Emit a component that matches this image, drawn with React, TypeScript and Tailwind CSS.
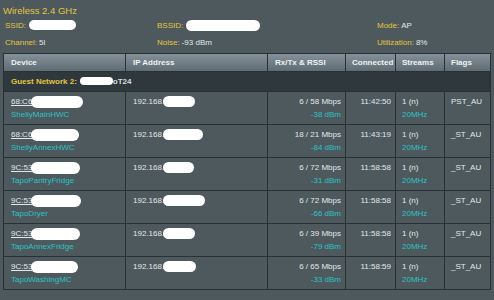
import React from "react";

interface Client {
  mac: string;
  macBlob: number;
  ipBlob: number;
  name: string;
  rate: string;
  rssi: string;
  time: string;
  flags: string;
}

const clients: Client[] = [
  { mac: "68:C6", macBlob: 52, ipBlob: 32, name: "ShellyMainHWC", rate: "6 / 58 Mbps", rssi: "-38 dBm", time: "11:42:50", flags: "PST_AU" },
  { mac: "68:C6", macBlob: 48, ipBlob: 40, name: "ShellyAnnexHWC", rate: "18 / 21 Mbps", rssi: "-84 dBm", time: "11:43:19", flags: "_ST_AU" },
  { mac: "9C:53", macBlob: 49, ipBlob: 31, name: "TapoPantryFridge", rate: "6 / 72 Mbps", rssi: "-31 dBm", time: "11:58:58", flags: "_ST_AU" },
  { mac: "9C:53", macBlob: 50, ipBlob: 42, name: "TapoDryer", rate: "6 / 72 Mbps", rssi: "-66 dBm", time: "11:58:58", flags: "_ST_AU" },
  { mac: "9C:53", macBlob: 49, ipBlob: 32, name: "TapoAnnexFridge", rate: "6 / 39 Mbps", rssi: "-79 dBm", time: "11:58:58", flags: "_ST_AU" },
  { mac: "9C:53", macBlob: 47, ipBlob: 33, name: "TapoWashingMC", rate: "6 / 65 Mbps", rssi: "-33 dBm", time: "11:58:59", flags: "_ST_AU" },
];

// white scribble used to hide private values
const Blob = ({ w, h = 11 }: { w: number; h?: number }) => (
  <span
    className="inline-block bg-white rounded-full align-middle"
    style={{ width: w, height: h }}
  />
);

const App = () => {
  return (
    <div className="w-[494px] h-[300px] overflow-hidden bg-[#4d595d] font-['Liberation_Sans',Arial,sans-serif] text-[8px] text-[#e3e7e8]">
      <div className="pl-[3px] pt-[4px] h-[17px] leading-[13px] text-[9.5px] text-[#e6c440]">
        Wireless 2.4 GHz
      </div>

      <div className="grid grid-cols-[152px_220px_1fr] pl-[5px]">
        <div className="h-[17px] flex items-center">
          <span className="text-[#e6c440]">SSID:</span>
          <span className="ml-[3px]"><Blob w={47} h={10} /></span>
        </div>
        <div className="h-[17px] flex items-center">
          <span className="text-[#e6c440]">BSSID:</span>
          <span className="ml-[3px]"><Blob w={74} h={11} /></span>
        </div>
        <div className="h-[17px] flex items-center">
          <span className="text-[#e6c440]">Mode:</span>
          <span className="ml-[2px]">AP</span>
        </div>
        <div className="h-[17px] flex items-center">
          <span className="text-[#e6c440]">Channel:</span>
          <span className="ml-[2px]">5l</span>
        </div>
        <div className="h-[17px] flex items-center">
          <span className="text-[#e6c440]">Noise:</span>
          <span className="ml-[2px]">-93 dBm</span>
        </div>
        <div className="h-[17px] flex items-center">
          <span className="text-[#e6c440]">Utilization:</span>
          <span className="ml-[2px]">8%</span>
        </div>
      </div>

      <table className="ml-[3px] mt-[2px] w-[487px] table-fixed border-collapse border border-[#283236]">
        <colgroup>
          <col className="w-[122px]" />
          <col className="w-[142px]" />
          <col className="w-[78px]" />
          <col className="w-[50px]" />
          <col className="w-[49px]" />
          <col className="w-[46px]" />
        </colgroup>
        <thead>
          <tr className="h-[18px] bg-gradient-to-b from-[#84919a] to-[#5d6a70] font-bold text-left text-[#eef1f2]">
            <th className="pl-[7px] border border-[#283236] font-bold">Device</th>
            <th className="pl-[7px] border border-[#283236] font-bold">IP Address</th>
            <th className="pl-[7px] border border-[#283236] font-bold">Rx/Tx &amp; RSSI</th>
            <th className="pl-[6px] border border-[#283236] font-bold">Connected</th>
            <th className="pl-[6px] border border-[#283236] font-bold">Streams</th>
            <th className="pl-[6px] border border-[#283236] font-bold">Flags</th>
          </tr>
        </thead>
        <tbody>
          <tr className="h-[20px] bg-[#2f393d]">
            <td colSpan={6} className="pl-[7px] border border-[#283236]">
              <span className="font-bold text-[#e6c440]">Guest Network 2:</span>
              <span className="ml-[3px]"><Blob w={33} h={8} /></span>
              <span className="font-bold text-[#d8dcdd]">oT24</span>
            </td>
          </tr>
          {clients.map((c, i) => (
            <tr key={i} className="h-[33px] align-top leading-[13px]">
              <td className="pl-[7px] pt-[3px] border border-[#283236]">
                <div className="whitespace-nowrap">
                  <span className="underline">{c.mac}</span>
                  <span className="-ml-[1px]"><Blob w={c.macBlob} h={12} /></span>
                </div>
                <div className="text-[#2cc3c6]">{c.name}</div>
              </td>
              <td className="pl-[7px] pt-[3px] border border-[#283236]">
                <div className="whitespace-nowrap">
                  <span>192.168.</span>
                  <span className="-ml-[1px]"><Blob w={c.ipBlob} h={11} /></span>
                </div>
              </td>
              <td className="pr-[4px] pt-[3px] text-right border border-[#283236]">
                <div>{c.rate}</div>
                <div className="text-[#2cc3c6]">{c.rssi}</div>
              </td>
              <td className="pr-[4px] pt-[3px] text-right border border-[#283236]">
                {c.time}
              </td>
              <td className="pl-[6px] pt-[3px] border border-[#283236]">
                <div>1 (n)</div>
                <div className="text-[#2cc3c6]">20MHz</div>
              </td>
              <td className="pl-[6px] pt-[3px] border border-[#283236]">
                {c.flags}
              </td>
            </tr>
          ))}
        </tbody>
      </table>
    </div>
  );
};

export default App;
